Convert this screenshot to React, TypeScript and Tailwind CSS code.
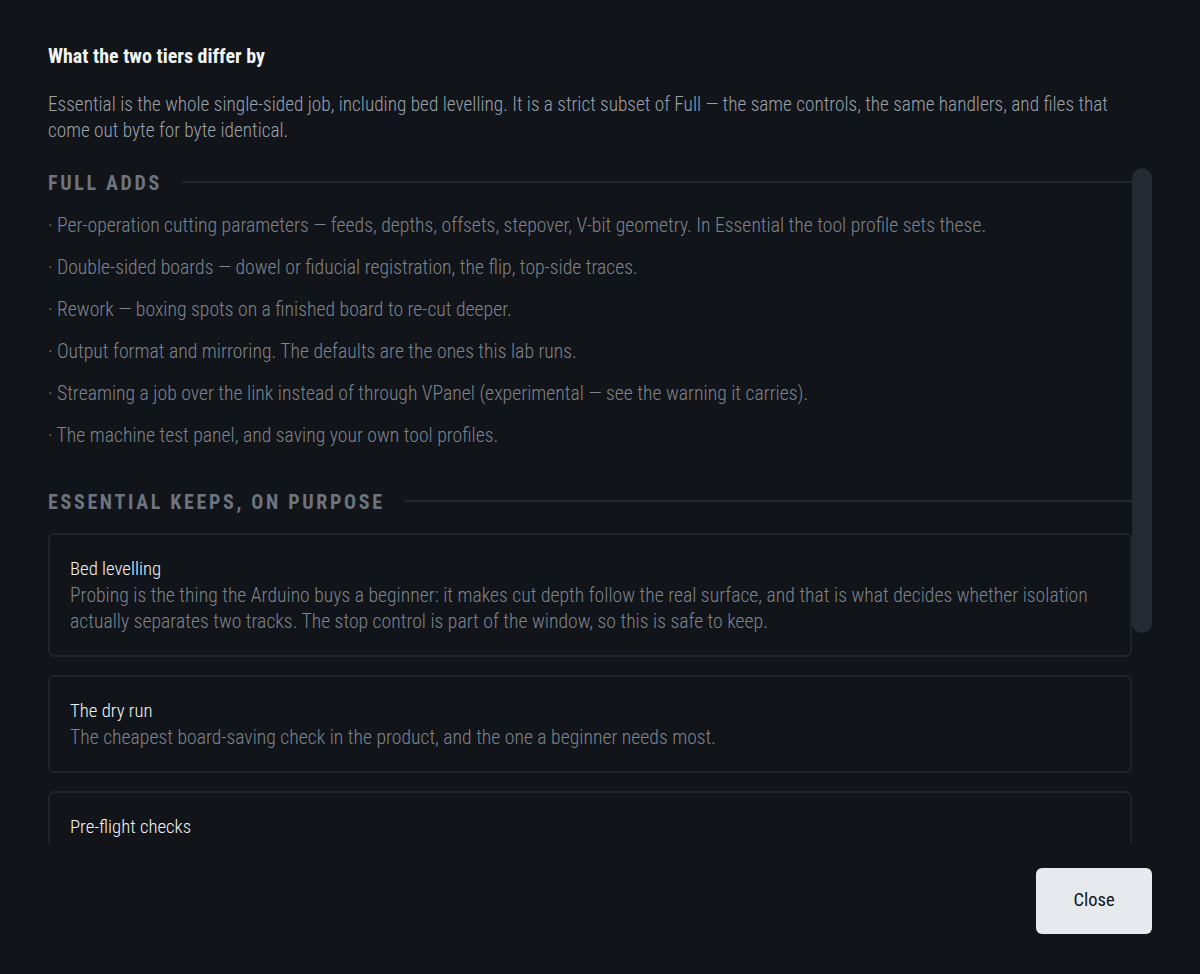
const FULL_ADDS = [
  'Per-operation cutting parameters — feeds, depths, offsets, stepover, V-bit geometry. In Essential the tool profile sets these.',
  'Double-sided boards — dowel or fiducial registration, the flip, top-side traces.',
  'Rework — boxing spots on a finished board to re-cut deeper.',
  'Output format and mirroring. The defaults are the ones this lab runs.',
  'Streaming a job over the link instead of through VPanel (experimental — see the warning it carries).',
  'The machine test panel, and saving your own tool profiles.',
]

const KEEPS: { title: string; body?: string }[] = [
  {
    title: 'Bed levelling',
    body: 'Probing is the thing the Arduino buys a beginner: it makes cut depth follow the real surface, and that is what decides whether isolation actually separates two tracks. The stop control is part of the window, so this is safe to keep.',
  },
  {
    title: 'The dry run',
    body: 'The cheapest board-saving check in the product, and the one a beginner needs most.',
  },
  { title: 'Pre-flight checks' },
]

const FONT = { fontFamily: '"Roboto Condensed", "Liberation Sans", sans-serif' }

function SectionHeader({ label }: { label: string }) {
  return (
    <div className="flex items-center gap-5 h-[30px]">
      <span className="text-[20px] font-bold uppercase tracking-[0.133em] text-[#6b7480] leading-[30px] whitespace-nowrap">{label}</span>
      <div className="flex-1 h-[2px] bg-[#22272e] -translate-y-px" />
    </div>
  )
}

export default function App() {
  return (
    <div className="h-screen bg-[#111418] flex flex-col px-12 pt-[44px] pb-10 overflow-hidden" style={FONT}>
      <h2 className="text-[20px] font-bold leading-[24px] text-[#f3f4f6]">What the two tiers differ by</h2>
      <p className="mt-6 text-[19.3px] font-light leading-[26px] text-[#9aa1ab]">
        Essential is the whole single-sided job, including bed levelling. It is a strict subset of Full — the same controls, the same handlers, and files that come out byte for byte identical.
      </p>

      <div className="mt-6 flex-1 min-h-0 flex">
        <div className="flex-1 min-w-0 overflow-hidden">
          <SectionHeader label="Full adds" />
          <ul className="mt-[13px] flex flex-col gap-3">
            {FULL_ADDS.map(t => (
              <li key={t} className="text-[19.7px] font-light leading-[30px] text-[#7d848e]">· {t}</li>
            ))}
          </ul>

          <div className="mt-9">
            <SectionHeader label="Essential keeps, on purpose" />
          </div>
          <div className="mt-4 flex flex-col gap-[18px]">
            {KEEPS.map(k => (
              <div key={k.title} className="border-2 border-[#20252c] rounded-md p-5">
                <div className="text-[18.8px] font-light leading-[28px] text-[#f3f4f6]">{k.title}</div>
                {k.body && <div className="text-[19.7px] font-light leading-[26px] text-[#7d848e]">{k.body}</div>}
              </div>
            ))}
          </div>
        </div>
        {/* scrollbar */}
        <div className="w-5 shrink-0">
          <div className="h-[465px] rounded-full bg-[#252a33]" />
        </div>
      </div>

      <div className="mt-[25px] flex justify-end">
        <button className="h-[66px] w-[116px] rounded-md bg-[#e6eaef] text-[18.5px] text-[#111418]">Close</button>
      </div>
    </div>
  )
}
